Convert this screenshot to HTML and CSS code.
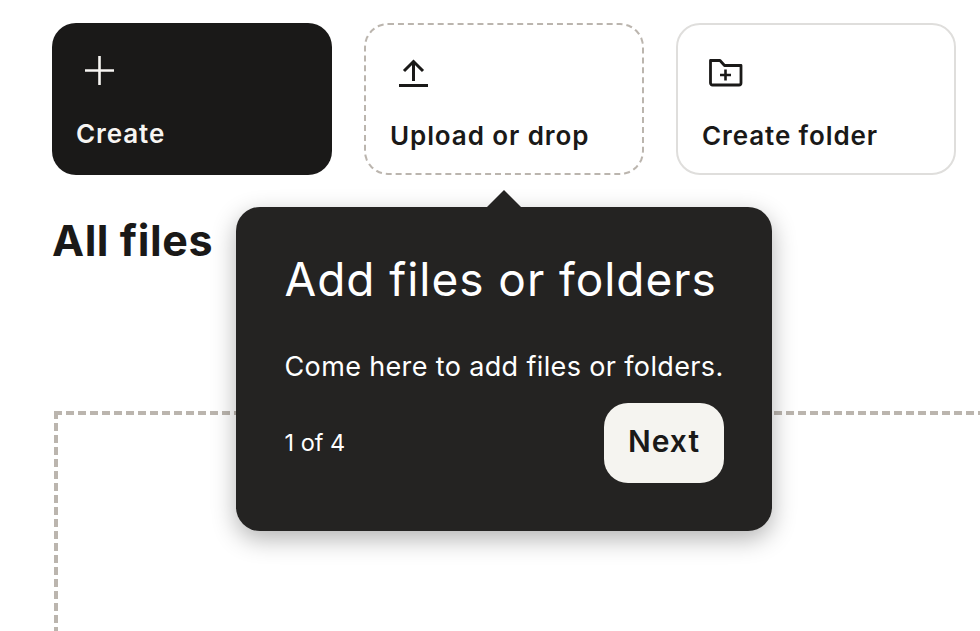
FILE: index.html
```html
<!DOCTYPE html>
<html lang="en">
<head>
<meta charset="utf-8">
<title>All files</title>
<link rel="stylesheet" href="styles.css">
</head>
<body>
<main class="page">
  <section class="actions">
    <button class="card card-primary">
      <svg class="icon" viewBox="0 0 48 48"><path d="M23.500 9v29M9 23.500h29" stroke-width="2.600"/></svg>
      <span class="card-label">Create</span>
    </button>
    <button class="card card-dashed">
      <svg class="icon" viewBox="0 0 48 48"><path d="M9 36.500h29" stroke-width="3"/><path d="M23.500 12.500V32M14 22l9.500-9.500L33 22" stroke-width="3"/></svg>
      <span class="card-label">Upload or drop</span>
    </button>
    <button class="card card-outline">
      <svg class="icon" viewBox="0 0 48 48"><path d="M8.500 11.500h9.500l4.500 5H39v17.500a2 2 0 0 1-2 2H10.500a2 2 0 0 1-2-2z" stroke-width="2.800" stroke-linejoin="round"/><path d="M23.500 20.500v11M18 26h11" stroke-width="2.600"/></svg>
      <span class="card-label">Create folder</span>
    </button>
  </section>
  <h1 class="title">All files</h1>
  <div class="dropzone"></div>
</main>
<aside class="popover">
  <h2 class="popover-title">Add files or folders</h2>
  <p class="popover-text">Come here to add files or folders.</p>
  <div class="popover-foot">
    <span class="popover-step">1 of 4</span>
    <button class="next">Next</button>
  </div>
</aside>
</body>
</html>
```
FILE: styles.css
```css
* { box-sizing: border-box; }
html, body { margin: 0; height: 100%; overflow: hidden; background: #fff; }
body { position: relative; font-family: Inter, "Liberation Sans", sans-serif; color: #1a1918; }
.page { padding: 23px 0 0 52px; }
.actions { display: flex; gap: 32px; }
.card {
  width: 280px; height: 152px; padding: 24px; border-radius: 24px;
  display: flex; flex-direction: column; align-items: flex-start; gap: 23px;
  background: #fff; color: #1a1918; font: inherit; text-align: left;
  border: 0;
}
.card-primary { background: #1a1918; color: #f7f5f2; }
.card-dashed { border: 2px dashed #bbb5ae; }
.card-outline { border: 2px solid #dfdedc; }
.icon { width: 48px; height: 48px; flex: none; fill: none; stroke: currentColor; }
.card-label { font-size: 26px; line-height: 32px; font-weight: 600; letter-spacing: 0.9px; white-space: nowrap; }
.title { margin: 37px 0 0; font-size: 43px; line-height: 56px; font-weight: 650; letter-spacing: 0.55px; }
.dropzone {
  margin: 143px 0 0 2px; width: 926px; height: 220px;
  background-image:
    repeating-linear-gradient(90deg, #bbb5ae 0 8px, transparent 8px 12px),
    repeating-linear-gradient(180deg, #bbb5ae 0 8px, transparent 8px 12px);
  background-size: 100% 4px, 4px 100%;
  background-position: 0 0, 0 0;
  background-repeat: no-repeat;
}
.popover {
  position: absolute; left: 236px; top: 207px; width: 536px; height: 324px;
  padding: 44px 48px 48px 48.500px; border-radius: 24px; background: #242322; color: #fff;
  box-shadow: 0 8px 24px rgba(0, 0, 0, 0.3);
}
.popover::before {
  content: ""; position: absolute; left: 251px; top: -17px; width: 34px; height: 17px;
  background: #242322; clip-path: polygon(50% 0, 100% 100%, 0 100%);
}
.popover-title { margin: 0; font-size: 46px; line-height: 56px; font-weight: 400; letter-spacing: 0.95px; white-space: nowrap; }
.popover-text { margin: 44px 0 0; font-size: 27px; line-height: 32px; font-weight: 400; letter-spacing: 0.36px; white-space: nowrap; }
.popover-foot { display: flex; justify-content: space-between; align-items: center; margin-top: 20px; }
.popover-step { font-size: 23.500px; line-height: 32px; }
.next {
  width: 120px; height: 80px; padding: 0 0 4px; border: 0; border-radius: 24px; background: #f5f4f0; color: #1a1918;
  font: inherit; font-size: 30px; font-weight: 600; letter-spacing: 1px;
}
```
